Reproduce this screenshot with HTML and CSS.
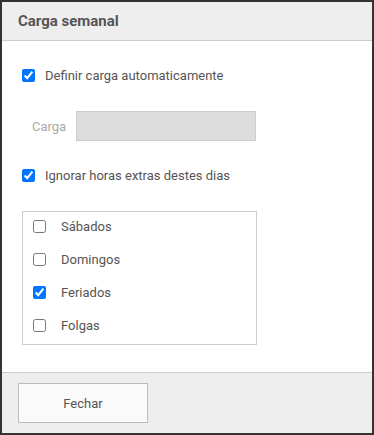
FILE: index.html
```html
<!DOCTYPE html>
<html lang="pt">
<head>
  <meta charset="UTF-8">
  <meta name="viewport" content="width=device-width, initial-scale=1.0">
  <title>Carga semanal</title>
  <link rel="stylesheet" href="styles.css">
</head>
<body>
  <div class="dialog">
    <!-- Header -->
    <div class="dialog-header">
      <h2>Carga semanal</h2>
    </div>

    <!-- Body -->
    <div class="dialog-body">
      <label class="check-row first">
        <input type="checkbox" checked>
        <span>Definir carga automaticamente</span>
      </label>

      <div class="field-row">
        <span class="field-label">Carga</span>
        <div class="field-input"></div>
      </div>

      <label class="check-row second">
        <input type="checkbox" checked>
        <span>Ignorar horas extras destes dias</span>
      </label>

      <div class="day-list">
        <label class="day-item"><input type="checkbox"><span>Sábados</span></label>
        <label class="day-item"><input type="checkbox"><span>Domingos</span></label>
        <label class="day-item"><input type="checkbox" checked><span>Feriados</span></label>
        <label class="day-item"><input type="checkbox"><span>Folgas</span></label>
      </div>
    </div>

    <!-- Footer -->
    <div class="dialog-footer">
      <button type="button">Fechar</button>
    </div>
  </div>
</body>
</html>
```

FILE: styles.css
```css
/* Basic styles for the page */
body {
  font-family: Roboto, "Liberation Sans", sans-serif;
  margin: 0;
  padding: 0;
  background-color: #fff;
  color: #555;
}

.dialog {
  width: 374px;
  height: 435px;
  box-sizing: border-box;
  border: 2px solid #333;
  display: flex;
  flex-direction: column;
}

.dialog-header {
  height: 38px;
  background-color: #eee;
  border-bottom: 1px solid #ccc;
  display: flex;
  align-items: center;
  padding-left: 16px;
}

.dialog-header h2 {
  margin: 0;
  font-size: 15px;
  font-weight: bold;
  color: #555;
}

.dialog-body {
  flex: 1;
  padding: 0 20px;
}

.check-row {
  display: flex;
  align-items: center;
  height: 20px;
  font-size: 13px;
}

.check-row input,
.day-item input {
  width: 13px;
  height: 13px;
  margin: 0 10px 0 0;
}

.check-row.first {
  margin-top: 24px;
}

.check-row.second {
  margin-top: 24px;
}

.field-row {
  display: flex;
  align-items: center;
  margin-top: 26px;
}

.field-label {
  width: 44px;
  padding-left: 10px;
  font-size: 13px;
  color: #aaa;
}

.field-input {
  width: 178px;
  height: 28px;
  background-color: #ddd;
  border: 1px solid #ccc;
}

.day-list {
  width: 233px;
  margin-top: 26px;
  border: 1px solid #ccc;
}

.day-item {
  display: flex;
  align-items: center;
  height: 29px;
  padding: 0 0 4px 10px;
  font-size: 13px;
}

.day-item input {
  margin-right: 15px;
}

.dialog-footer {
  height: 61px;
  background-color: #eee;
  border-top: 1px solid #ccc;
  padding: 10px 0 0 16px;
  box-sizing: border-box;
}

.dialog-footer button {
  width: 130px;
  height: 40px;
  background-color: #fafafa;
  border: 1px solid #bbb;
  font-family: Roboto, "Liberation Sans", sans-serif;
  font-size: 13px;
  color: #555;
  cursor: pointer;
}
```
